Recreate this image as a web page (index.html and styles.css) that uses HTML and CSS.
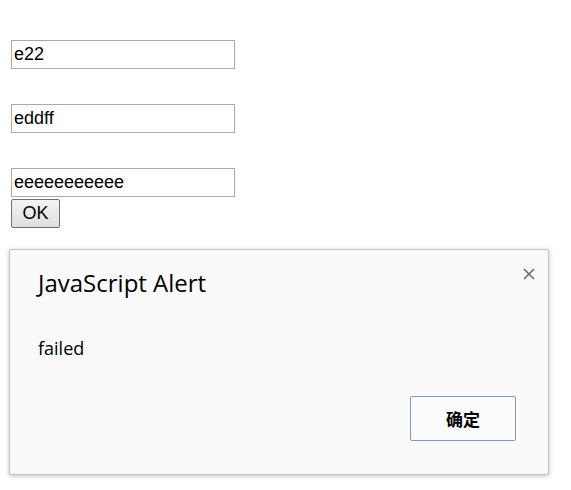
FILE: index.html
```html
<!DOCTYPE html>
<html lang="en">
<head>
<meta charset="UTF-8">
<meta name="viewport" content="width=device-width, initial-scale=1.0">
<title>Form Check</title>
<link rel="stylesheet" href="styles.css">
</head>
<body>
<form class="form">
    <input type="text" class="field" value="e22">
    <input type="text" class="field" value="eddff">
    <input type="text" class="field" value="eeeeeeeeeee">
    <button type="button" class="ok">OK</button>
</form>

<!-- alert box -->
<div class="alert">
    <button type="button" class="close" aria-label="Close">
        <svg width="12" height="12" viewBox="0 0 12 12">
            <path d="M1 1 L11 11 M11 1 L1 11" stroke="#6b6b6b" stroke-width="1.6" fill="none"/>
        </svg>
    </button>
    <div class="title">JavaScript Alert</div>
    <div class="message">failed</div>
    <div class="actions">
        <button type="button" class="confirm">确定</button>
    </div>
</div>
</body>
</html>
```

FILE: styles.css
```css
body {
    margin: 0;
    padding: 40px 11px 0;
    font-family: "Liberation Sans", Arial, sans-serif;
    background-color: #fff;
}
.form {
    display: flex;
    flex-direction: column;
    align-items: flex-start;
}
.field {
    box-sizing: border-box;
    width: 224px;
    height: 29px;
    margin: 0 0 35px;
    padding: 1px 2px;
    border: 1px solid #a9a9a9;
    font-family: "Liberation Sans", Arial, sans-serif;
    font-size: 18px;
    color: #000;
}
.field:nth-child(3) {
    margin-bottom: 2px;
}
.ok {
    box-sizing: border-box;
    width: 49px;
    height: 29px;
    padding: 0;
    border: 1px solid #707070;
    border-radius: 2px;
    background: linear-gradient(#f4f4f4, #dedede);
    font-family: "Liberation Sans", Arial, sans-serif;
    font-size: 18px;
    color: #000;
}
.alert {
    position: absolute;
    top: 249px;
    left: 9px;
    box-sizing: border-box;
    width: 540px;
    height: 226px;
    padding: 18px 32px 33px 28px;
    display: flex;
    flex-direction: column;
    background-color: #fafafa;
    border: 1px solid #c4c4c4;
    border-radius: 2px;
    box-shadow: 0 1px 4px rgba(0,0,0,0.25);
    font-family: "Open Sans", "Noto Sans", sans-serif;
    color: #000;
}
.close {
    position: absolute;
    top: 17px;
    right: 12px;
    width: 14px;
    height: 14px;
    padding: 1px;
    border: none;
    background: none;
    line-height: 0;
}
.title {
    font-size: 24px;
    line-height: 30px;
}
.message {
    margin-top: 38px;
    font-size: 18px;
    line-height: 24px;
}
.actions {
    margin-top: auto;
    display: flex;
    justify-content: flex-end;
}
.confirm {
    box-sizing: border-box;
    width: 106px;
    height: 45px;
    border: 1px solid #7a9cc9;
    border-radius: 2px;
    background-color: #fbfbfb;
    font-family: "Noto Sans CJK SC", sans-serif;
    font-size: 17px;
    font-weight: bold;
    color: #000;
}
```
